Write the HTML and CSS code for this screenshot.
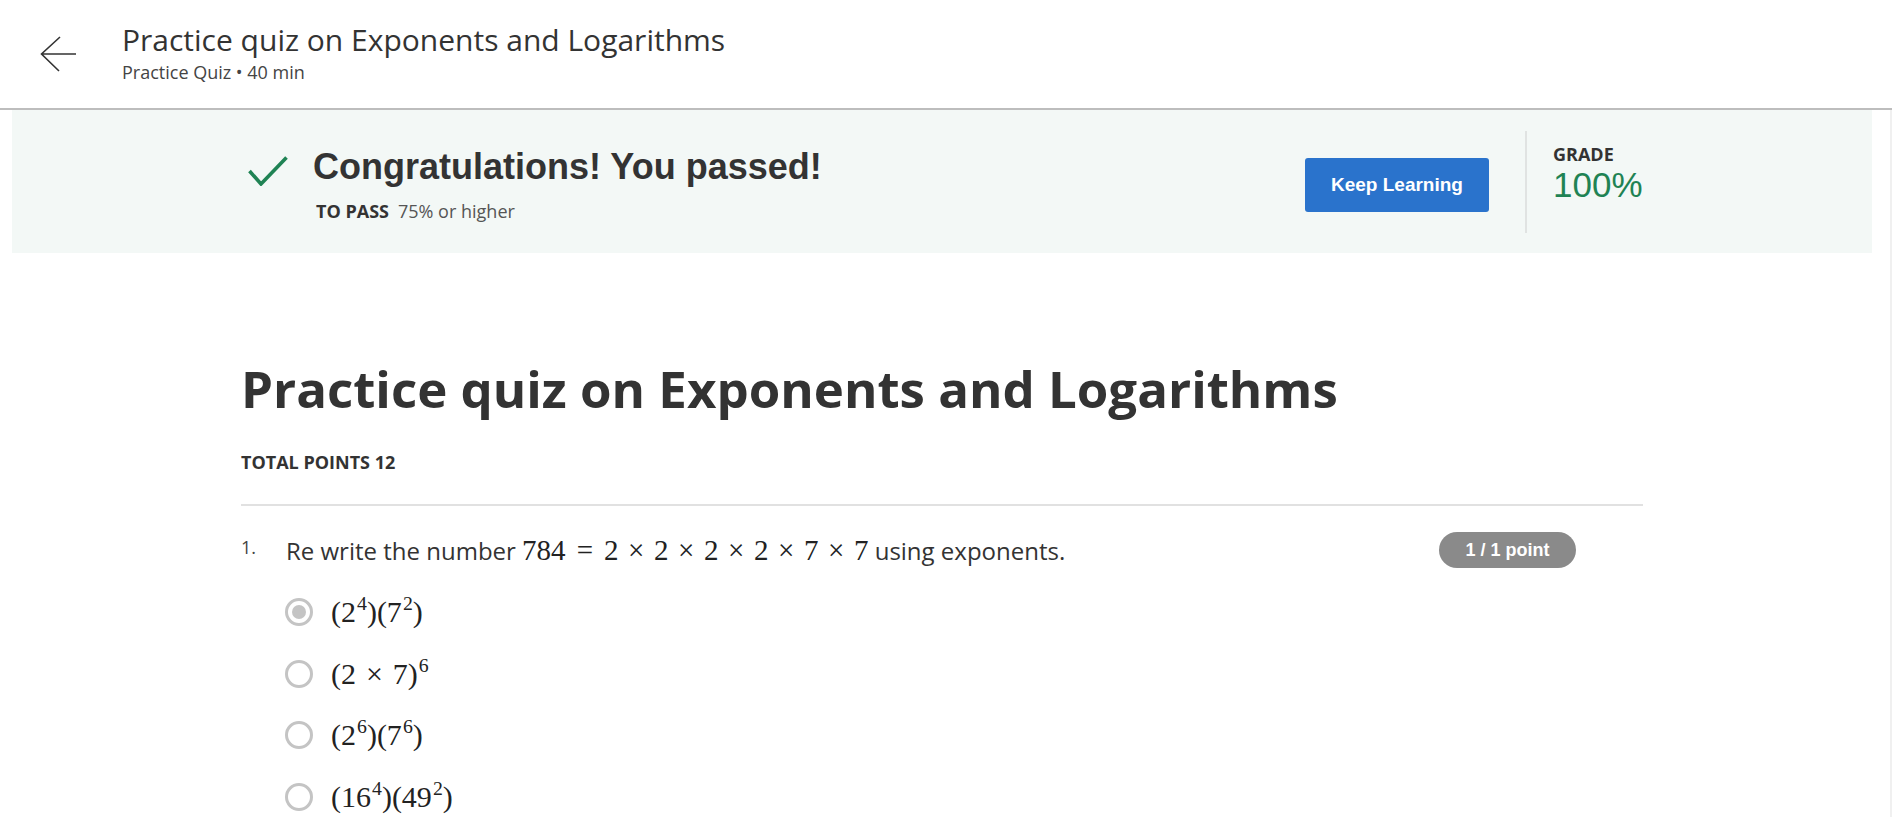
FILE: index.html
```html
<!DOCTYPE html>
<html lang="en">
<head>
<meta charset="utf-8">
<title>Practice quiz on Exponents and Logarithms</title>
<link rel="stylesheet" href="styles.css">
</head>
<body>
<header class="header">
  <svg class="back" width="36" height="36" viewBox="0 0 36 36" aria-hidden="true">
    <path d="M1 18 H36 M20 1 L1.5 18 L19 35" fill="none" stroke="#333" stroke-width="1.6"/>
  </svg>
  <div class="htext">
    <div class="htitle">Practice quiz on Exponents and Logarithms</div>
    <div class="hsub">Practice Quiz • 40 min</div>
  </div>
</header>
<div class="body-row">
  <div class="page">
    <section class="banner">
      <div class="wrap banner-inner">
        <div class="pass">
          <svg class="check" width="40" height="30" viewBox="0 0 40 30" aria-hidden="true">
            <path d="M1.5 15 L13 28 L38.5 1.5" fill="none" stroke="#1f8354" stroke-width="3.6"/>
          </svg>
          <div class="pass-text">
            <h2 class="congrats">Congratulations! You passed!</h2>
            <div class="topass"><b>TO PASS</b>75% or higher</div>
          </div>
        </div>
        <div class="result">
          <button class="keep">Keep Learning</button>
          <div class="vdiv"></div>
          <div class="grade">
            <div class="glabel">GRADE</div>
            <div class="gval">100%</div>
          </div>
        </div>
      </div>
    </section>
    <main class="wrap content">
      <h1 class="title">Practice quiz on Exponents and Logarithms</h1>
      <div class="total">TOTAL POINTS 12</div>
      <div class="rule"></div>
      <div class="question">
        <div class="qrow">
          <span class="qnum">1.</span>
          <div class="qtext">Re write the number <span class="math">784<span class="rel">=</span>2<span class="bin">×</span>2<span class="bin">×</span>2<span class="bin">×</span>2<span class="bin">×</span>7<span class="bin">×</span>7</span> using exponents.</div>
          <span class="badge">1 / 1 point</span>
        </div>
        <div class="options">
          <div class="opt"><span class="radio checked"></span><span class="math">(2<sup>4</sup>)(7<sup>2</sup>)</span></div>
          <div class="opt"><span class="radio"></span><span class="math">(2<span class="bin">×</span>7)<sup>6</sup></span></div>
          <div class="opt"><span class="radio"></span><span class="math">(2<sup>6</sup>)(7<sup>6</sup>)</span></div>
          <div class="opt"><span class="radio"></span><span class="math">(16<sup>4</sup>)(49<sup>2</sup>)</span></div>
        </div>
      </div>
    </main>
  </div>
  <div class="scroll"></div>
</div>
</body>
</html>
```
FILE: styles.css
```css
* { box-sizing: border-box; }
html, body { margin: 0; padding: 0; background: #fff; }
body {
  font-family: "Open Sans", "Noto Sans", sans-serif;
  color: #333;
  width: 1892px;
  height: 839px;
  overflow: hidden;
}

/* header */
.header {
  height: 110px;
  display: flex;
  align-items: center;
  padding-left: 40px;
  padding-bottom: 4px;
  border-bottom: 2px solid #bdbdbd;
}
.back { flex: none; margin-right: 46px; margin-top: 4px; }
.htitle { font-size: 30px; line-height: 38px; color: #333; }
.hsub { font-size: 18px; line-height: 24px; margin-top: 1px; color: #444; }

.body-row { display: flex; }
.page { flex: 1; min-width: 0; }
.scroll { flex: none; width: 8px; border-right: 2px solid #f0f0f0; }

.wrap { width: 1402px; margin: 0 auto; }

/* banner */
.banner {
  margin: 0 12px;
  height: 143px;
  background: #f3f8f6;
}
.banner-inner {
  height: 100%;
  display: flex;
  align-items: center;
  justify-content: space-between;
}
.pass { display: flex; align-items: flex-start; padding-left: 7px; margin-top: 6px; }
.check { flex: none; margin-top: 9px; margin-right: 25px; }
.congrats {
  margin: 0;
  font-family: "Liberation Sans", Arial, sans-serif;
  font-weight: 700;
  font-size: 36px;
  line-height: 40px;
  color: #333;
}
.topass { margin-top: 12px; padding-left: 3px; font-size: 18px; line-height: 24px; color: #555; }
.topass b { color: #333; font-weight: 700; margin-right: 9px; }

.result { display: flex; align-items: center; }
.keep {
  width: 184px;
  height: 54px;
  margin-top: 6px;
  border: 0;
  border-radius: 3px;
  background: #2a73cc;
  color: #fff;
  font-family: "Liberation Sans", Arial, sans-serif;
  font-weight: 700;
  font-size: 19px;
}
.vdiv { width: 2px; height: 102px; background: #e0e3e2; margin: 0 26px 0 36px; }
.grade { width: 90px; margin-bottom: 16px; }
.glabel { font-size: 18px; line-height: 22px; font-weight: 700; color: #333; }
.gval {
  font-family: "Liberation Sans", Arial, sans-serif;
  font-size: 35px;
  line-height: 38px;
  margin-top: 1px;
  color: #1f8354;
}

/* content */
.content { padding-top: 103px; }
.title {
  margin: 0;
  font-size: 51px;
  line-height: 64px;
  font-weight: 700;
  color: #333;
}
.total { margin-top: 30px; font-size: 18px; line-height: 24px; font-weight: 700; color: #333; }
.rule { margin-top: 30px; height: 2px; background: #e1e1e1; }

.question { padding-top: 26px; }
.qrow { display: flex; align-items: center; }
.qnum { width: 45px; flex: none; font-size: 18px; line-height: 24px; color: #444; margin-top: -6px; }
.qtext { flex: 1; font-size: 24px; line-height: 32px; color: #333; }
.badge {
  flex: none;
  width: 137px;
  height: 36px;
  margin-right: 67px;
  border-radius: 18px;
  background: #8a8a8a;
  color: #fff;
  font-family: "Liberation Sans", Arial, sans-serif;
  font-weight: 700;
  font-size: 18px;
  display: flex;
  align-items: center;
  justify-content: center;
}

.math {
  font-family: "Liberation Serif", "Times New Roman", serif;
  color: #222;
}
.qtext .math { font-size: 29px; }
.rel { margin: 0 0.38em; }
.bin { margin: 0 0.33em; }
.math sup { font-size: 0.66em; vertical-align: 0; position: relative; top: -0.6em; margin-left: 1px; }

.options { padding-left: 44px; margin-top: 24px; display: flex; flex-direction: column; gap: 21.5px; }
.opt { height: 40px; display: flex; align-items: center; }
.opt .math { font-size: 30px; }
.radio {
  flex: none;
  width: 28px;
  height: 28px;
  border-radius: 50%;
  border: 3px solid #c4c4c4;
  margin-right: 18px;
  display: flex;
  align-items: center;
  justify-content: center;
}
.radio.checked::after {
  content: "";
  width: 14px;
  height: 14px;
  border-radius: 50%;
  background: #c4c4c4;
}
```
